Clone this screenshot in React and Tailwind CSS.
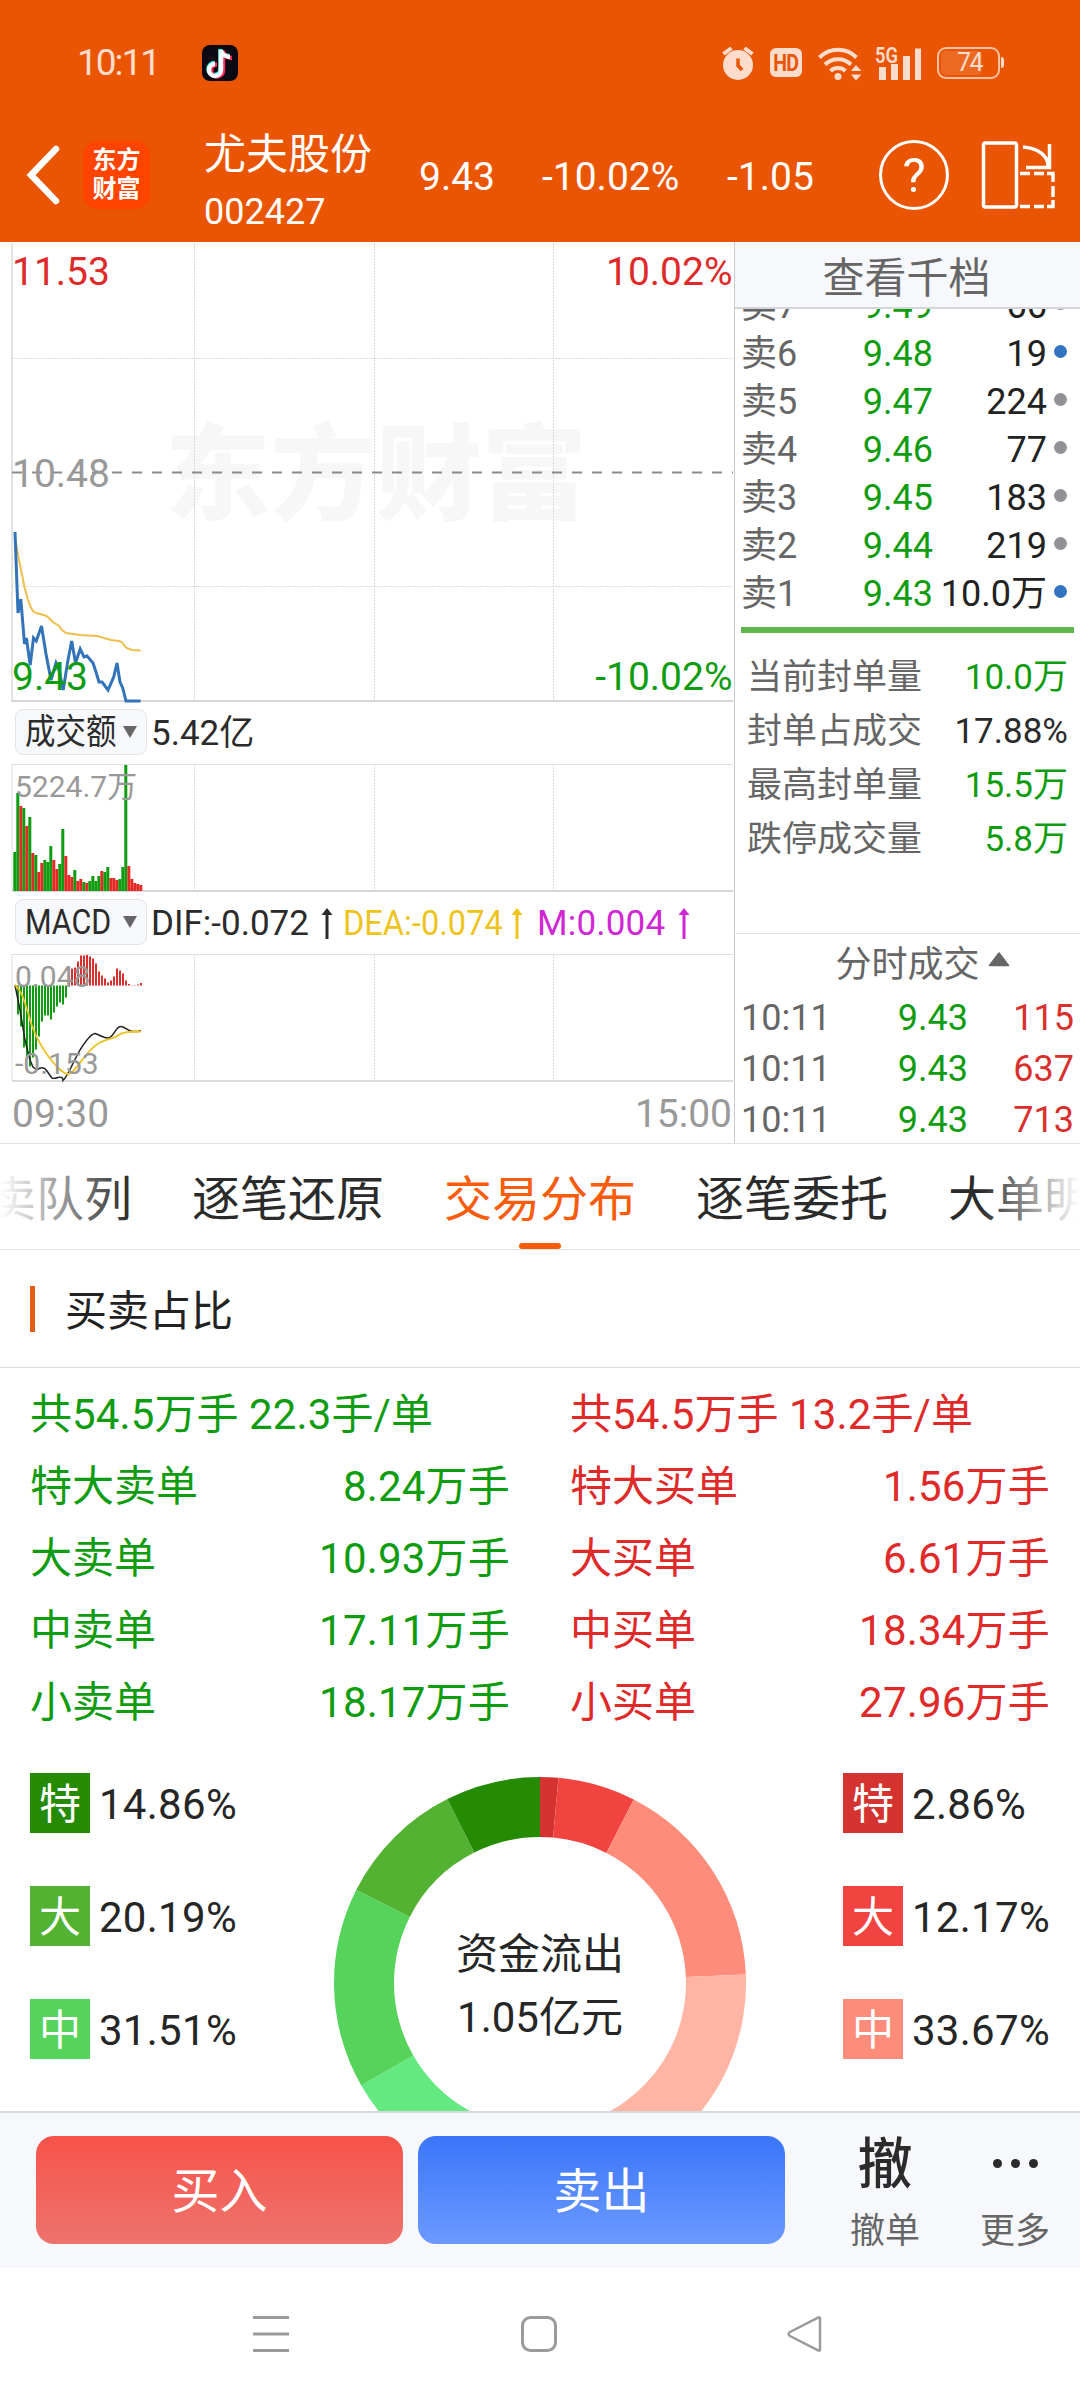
import React from "react";

const sellRows = [
  { label: "卖7", price: "9.49", volume: "66", dot: "bg-[#929196]" },
  { label: "卖6", price: "9.48", volume: "19", dot: "bg-[#3273c2]" },
  { label: "卖5", price: "9.47", volume: "224", dot: "bg-[#929196]" },
  { label: "卖4", price: "9.46", volume: "77", dot: "bg-[#929196]" },
  { label: "卖3", price: "9.45", volume: "183", dot: "bg-[#929196]" },
  { label: "卖2", price: "9.44", volume: "219", dot: "bg-[#929196]" },
  { label: "卖1", price: "9.43", volume: "10.0万", dot: "bg-[#3273c2]" },
];

const sealStats = [
  { label: "当前封单量", value: "10.0万", color: "text-[#109c10]" },
  { label: "封单占成交", value: "17.88%", color: "text-[#2b2b2b]" },
  { label: "最高封单量", value: "15.5万", color: "text-[#109c10]" },
  { label: "跌停成交量", value: "5.8万", color: "text-[#109c10]" },
];

const trades = [
  { time: "10:11", price: "9.43", volume: "115" },
  { time: "10:11", price: "9.43", volume: "637" },
  { time: "10:11", price: "9.43", volume: "713" },
];

const sellOrders = [
  ["特大卖单", "8.24万手"],
  ["大卖单", "10.93万手"],
  ["中卖单", "17.11万手"],
  ["小卖单", "18.17万手"],
];

const buyOrders = [
  ["特大买单", "1.56万手"],
  ["大买单", "6.61万手"],
  ["中买单", "18.34万手"],
  ["小买单", "27.96万手"],
];

const sellShare = [
  { tag: "特", value: "14.86%", bg: "bg-[#258a04]" },
  { tag: "大", value: "20.19%", bg: "bg-[#53b232]" },
  { tag: "中", value: "31.51%", bg: "bg-[#56d35a]" },
];

const buyShare = [
  { tag: "特", value: "2.86%", bg: "bg-[#d43330]" },
  { tag: "大", value: "12.17%", bg: "bg-[#f14340]" },
  { tag: "中", value: "33.67%", bg: "bg-[#fd8c7b]" },
];

const donut = [
  { value: 2.86, color: "#d43330" },
  { value: 12.17, color: "#f14340" },
  { value: 33.67, color: "#fd8c7b" },
  { value: 51.3, color: "#feb5a4" },
  { value: 33.44, color: "#64e981" },
  { value: 31.51, color: "#56d35a" },
  { value: 20.19, color: "#53b232" },
  { value: 14.86, color: "#258a04" },
];

// [height, is up]
const volumeBars = [
  [39, 0], [98, 0], [85, 1], [83, 0], [65, 1], [74, 0], [38, 1], [36, 0], [19, 1], [28, 1], [31, 0],
  [29, 0], [45, 0], [31, 1], [22, 1], [27, 0], [62, 0], [35, 1], [16, 1], [14, 1], [21, 0], [10, 1],
  [12, 1], [9, 0], [8, 1], [10, 0], [15, 0], [10, 0], [15, 0], [20, 1], [19, 0], [24, 0], [13, 1],
  [13, 1], [11, 1], [12, 0], [24, 0], [126, 0], [25, 1], [12, 1], [8, 1], [7, 1], [6, 1],
];

// positive goes above the zero line
const macdBars = [
  -29, -41, -62, -71, -81, -72, -64, -51, -36, -30, -30, -34, -27, -21, -17, -19, -12, 10, 17, 18, 24,
  30, 30, 30.5, 29, 27, 22, 14, 10, 7, 3, 5, 9, 17, 15, 12, 5, 1.5, 0.3, 0.3, 1, 2.5,
];

const pricePoints =
  "15,532 18,613 20.8,599 24.5,644 26.4,638 30.2,665 33.5,638 36.3,641 41.5,626 46,654 51,680 56,663 59,670 63.2,690 68,660 71.7,641 75.5,663 80.2,649 84,657 87,656 93,663 96,672 99,682 102,682 108,690 113.7,677 117,663 120,682 122.7,688 126,701 140.6,701";
const avgPoints =
  "15.5,540 19,560 24.5,587 28,600 30.7,607 33,611 36.3,613 42,614.5 46.2,616 49,618 52.9,622 59,626 62,630 66,633 80,635 97.7,636 104,638 111,640 119,641 121.8,642 124,645 126.5,648 132,650 140.6,650.5";

const sliceAt = (deg, r) => {
  const a = (deg * Math.PI) / 180;
  return `${206 + r * Math.sin(a)} ${206 - r * Math.cos(a)}`;
};

function StatusBar() {
  return (
    <div className="flex h-[84px] items-center pt-[41px] text-[#fddccb]">
      <span className="ml-[77px] w-[125px] text-[37px] tracking-[-2px]">10:11</span>
      <svg width="36" height="36" viewBox="0 0 36 36">
        <rect width="36" height="36" rx="8" fill="#0b0a14" />
        <g fill="none" strokeWidth="4.5">
          <path d="M18 4.5v20a6 6 0 1 1-6-6M18 5c1 4 5 6.500 9 6.500" stroke="#27f0ec" transform="translate(0.500 -.5)" />
          <path d="M20 5v20a6 6 0 1 1-6-6M20 6c1 4 5 6.500 9 6.500" stroke="#fd2d58" transform="translate(1 .5)" />
          <path d="M19 5v20a6 6 0 1 1-6-6M19 5.500c1 4 5 6.500 9 6.500" stroke="#fff" />
        </g>
      </svg>

      <svg className="ml-[484px]" width="32" height="36" viewBox="0 0 32 36">
        <circle cx="16" cy="20" r="15" fill="currentColor" />
        <path d="M1.500 9l8-6M30.500 9l-8-6" stroke="currentColor" strokeWidth="4" />
        <path d="M16 13.500v7l4 4.500" fill="none" stroke="#ea5504" strokeWidth="3.500" />
      </svg>
      <span className="ml-[16px] flex h-[29px] w-[32px] items-center justify-center rounded-[6px] bg-[#fddccb] pt-[2px] text-[23px] leading-none font-bold tracking-[-1px] text-[#ea5504]">
        <span className="scale-x-[0.85]">HD</span>
      </span>
      <svg className="ml-[15px]" width="46" height="36" viewBox="0 0 46 36">
        <g fill="none" stroke="currentColor" strokeWidth="4">
          <path d="M2.500 12.500a26 26 0 0 1 37 0" />
          <path d="M8 19.500a18.500 18.500 0 0 1 26 0" />
          <path d="M13.500 26a11 11 0 0 1 15 0" />
        </g>
        <circle cx="21" cy="31.500" r="3.500" fill="currentColor" />
        <path d="M34 26l5-6 5.500 6zM34 29.500l5 6 5.500-6z" fill="currentColor" />
      </svg>
      <svg className="ml-[12px]" width="48" height="36" viewBox="0 0 48 36">
        <text x="0" y="17.500" fontSize="22" fontWeight="600" fill="currentColor" textLength="23" lengthAdjust="spacingAndGlyphs">5G</text>
        <path d="M4 22h7v13h-7zM16 19h7v16h-7zM28 11h7v24h-7zM40 3.500h6v31.500h-6z" fill="currentColor" />
      </svg>
      <span className="ml-[14px] flex h-[32px] w-[63px] rounded-[9px] border-2 border-[#fddccb]/80 p-[2px]">
        <span className="flex w-[41px] items-center justify-end rounded-[5px] bg-white/12 pt-[1px] text-[25px] leading-[24px] tracking-[-1.5px]">
          74
        </span>
      </span>
      <span className="ml-[1px] h-[11px] w-[3px] rounded-r bg-[#fddccb]" />
    </div>
  );
}

function TitleBar() {
  return (
    <div className="mt-[24px] flex h-[134px] items-center text-[39px] text-white">
      <svg className="ml-[25px]" width="36" height="60" viewBox="0 0 36 60" fill="none" stroke="#fff" strokeWidth="6.500">
        <path d="M31 4L6 30l25 26" strokeLinecap="round" />
      </svg>
      <div className="ml-[22px] flex h-[68px] w-[67px] flex-col items-center justify-center rounded-[15px] bg-[#ff4400] text-[24px] leading-[29px] font-bold">
        <span>东方</span>
        <span>财富</span>
      </div>
      <div className="mt-[15px] ml-[54px] flex w-[215px] flex-col">
        <span className="text-[42px] leading-[58px]">尤夫股份</span>
        <span className="text-[36px] leading-[56px]">002427</span>
      </div>
      <span className="w-[123px] pt-[4px]">9.43</span>
      <span className="w-[185px] pt-[4px]">-10.02%</span>
      <span className="w-[152px] pt-[4px]">-1.05</span>
      <span className="flex h-[70px] w-[70px] items-center justify-center rounded-full border-[3px] border-white text-[49px] leading-none">
        ?
      </span>
      <svg className="ml-[32px]" width="76" height="70" viewBox="0 0 76 70" fill="none" stroke="#fff" strokeWidth="3.500">
        <rect x="2.500" y="3" width="33" height="64" rx="2" />
        <path d="M42 7c14 1 25 8 25 19M45 27.500h23.500V4" />
        <path d="M39 33.500h10M53 33.500h10M66 33.500h6V42M72 46v11M72 60v6.500h-6M63 66.500h-10M49 66.500h-10" />
      </svg>
    </div>
  );
}

function GridLines({ top, bottom }) {
  return (
    <g stroke="#d9d9d9" strokeDasharray="2 1" shapeRendering="crispEdges">
      {[194.5, 374.5, 553.5].map((x) => (
        <line key={x} x1={x} x2={x} y1={top} y2={bottom} />
      ))}
    </g>
  );
}

function PriceChart() {
  return (
    <svg className="block" width="734" height="462" viewBox="0 242 734 462" fontSize="39">
      <text x="165" y="512" fontSize="104" fontWeight="900" fill="#f7f7f7" textLength="422" lengthAdjust="spacingAndGlyphs">东方财富</text>
      <GridLines top={243} bottom={701} />
      <g stroke="#dcdcdc" shapeRendering="crispEdges">
        <path d="M12 358.500H733M12 586.500H733" strokeDasharray="2 1" />
        <path d="M12 243V702" strokeWidth="2" stroke="#e2e2e2" />
        <path d="M12 701H733" strokeWidth="2" stroke="#d6d6d6" />
      </g>
      <path d="M12 472.500H733" stroke="#8a8a8a" strokeWidth="2" strokeDasharray="10 10" />
      <polyline points={avgPoints} fill="none" stroke="#efbe4d" strokeWidth="2" />
      <polyline points={pricePoints} fill="none" stroke="#3273b9" strokeWidth="3" />
      <text x="12" y="285" fill="#e02a2a">11.53</text>
      <text x="732.5" y="285" fill="#e02a2a" textAnchor="end">10.02%</text>
      <text x="12" y="487" fill="#999">10.48</text>
      <text x="12" y="690" fill="#109c10">9.43</text>
      <text x="732.5" y="690" fill="#109c10" textAnchor="end">-10.02%</text>
    </svg>
  );
}

function VolumeChart() {
  return (
    <svg className="block" width="734" height="133" viewBox="0 760 734 133">
      <GridLines top={764} bottom={890} />
      <path d="M12 764.500H733M12 764V891" stroke="#dfdfdf" fill="none" />
      <path d="M12 891H733" stroke="#d6d6d6" strokeWidth="2" />
      {volumeBars.map(([h, up], i) => (
        <rect key={i} x={13.3 + i * 3} y={891 - h} width="3" height={h} fill={up ? "#e52a26" : "#109c10"} />
      ))}
      <text x="15" y="797" fontSize="30" fill="#999">5224.7万</text>
    </svg>
  );
}

function MacdChart() {
  return (
    <svg className="block" width="734" height="134" viewBox="0 951 734 134">
      <GridLines top={954} bottom={1080} />
      <path d="M12 954.500H733M12 954V1081" stroke="#dfdfdf" fill="none" />
      <path d="M12 1081H733" stroke="#dcdcdc" strokeWidth="2" />
      {macdBars.map((v, i) => (
        <rect
          key={i}
          x={17 + i * 3}
          y={v > 0 ? 985.5 - v : 985.5}
          width="2"
          height={Math.abs(v)}
          fill={v > 0 ? "#d9302e" : "#109c10"}
        />
      ))}
      <path
        d="M15 985L20 1010 25 1040 30 1060 33 1067 37 1070Q43 1065 47 1071T52 1078 58 1077.500 63 1080.500C68 1076 71 1066 80 1050Q90 1034 95 1033.500C100 1035 105 1039 109 1038C115 1035 116 1026 121 1026.500S127 1031 133 1031.500 138 1031 141 1030.500"
        fill="none"
        stroke="#222"
        strokeWidth="1.500"
      />
      <path
        d="M15 985C24 992 28 1015 32 1026S43 1052 58 1068C66 1075 68 1075 72 1072.500C80 1064 90 1047 100 1042.500S113 1039 117 1036 125 1031.500 141 1031.500"
        fill="none"
        stroke="#ecc221"
        strokeWidth="1.800"
      />
      <g fontSize="30" fill="#999">
        <text x="15" y="987">0.048</text>
        <text x="15" y="1073.500">-0.153</text>
      </g>
    </svg>
  );
}

function IndicatorPill({ children }) {
  return (
    <span className="ml-[15px] flex h-[46px] w-[132px] shrink-0 items-center rounded-[8px] border border-[#e2e4e8] bg-[#f6f8fb] pl-[9px]">
      <span className="w-[98px]">
        <span className="inline-block origin-left scale-x-[0.87] pt-[2px] whitespace-nowrap">{children}</span>
      </span>
      <span className="h-0 w-0 border-x-[7.5px] border-t-[12px] border-x-transparent border-t-[#666]" />
    </span>
  );
}

function UpArrow() {
  return (
    <svg className="shrink-0" width="12" height="32" viewBox="0 0 12 32" fill="currentColor">
      <path d="M6 0l5.500 7H7.500v24h-3V7H.5z" />
    </svg>
  );
}

function ChartPanel() {
  return (
    <div className="w-[734px] text-[35px] leading-[46px] text-[#2b2b2b]">
      <PriceChart />
      <div className="flex h-[56px] items-center">
        <IndicatorPill>成交额</IndicatorPill>
        <span className="ml-[4px] pt-[3px]">5.42亿</span>
      </div>
      <VolumeChart />
      <div className="flex h-[58px] items-center whitespace-nowrap">
        <IndicatorPill>MACD</IndicatorPill>
        <span className="ml-[4px] flex w-[192px] items-center gap-[12px] pt-[3px]">DIF:-0.072<UpArrow /></span>
        <span className="flex w-[194px] items-center pt-[3px] text-[#eec41c]">
          <span className="w-[168px]">
            <span className="inline-block origin-left scale-x-[0.93]">DEA:-0.074</span>
          </span>
          <UpArrow />
        </span>
        <span className="flex items-center gap-[13px] pt-[3px] text-[#cf27d4]">
          <span className="tracking-[0.2px]">M:0.004</span>
          <UpArrow />
        </span>
      </div>
      <MacdChart />
      <div className="flex h-[58px] items-center justify-between pr-[2px] pl-[12px] text-[39px] text-[#999]">
        <span>09:30</span>
        <span>15:00</span>
      </div>
    </div>
  );
}

function OrderBook() {
  return (
    <div className="flex w-[346px] flex-col overflow-hidden border-l border-[#c8cacc] text-[36px] text-[#666]">
      <div className="flex h-[67px] shrink-0 items-center justify-center border-b-2 border-[#d2d6da] bg-[#f6f8fb] pt-[7px] pr-[2px] text-[42px]">
        查看千档
      </div>
      <div className="flex h-[308px] shrink-0 flex-col justify-end overflow-hidden">
        {sellRows.map((row) => (
          <div key={row.label} className="flex h-[48px] shrink-0 items-center pl-[6px] leading-[48px]">
            <span className="w-[90px] pt-[2px]">{row.label}</span>
            <span className="w-[102px] pt-[2px] text-right text-[#109c10]">{row.price}</span>
            <span className="w-[114px] pt-[2px] text-right whitespace-nowrap text-[#222]">{row.volume}</span>
            <span className={`mb-[4px] ml-[7px] h-[13px] w-[13px] rounded-full ${row.dot}`} />
          </div>
        ))}
      </div>
      <div className="mt-[10px] mr-[6px] ml-[6px] h-[6px] shrink-0 bg-[#5fb74b]" />

      <div className="mt-[18px] shrink-0 text-[35px]">
        {sealStats.map((s) => (
          <div key={s.label} className="flex h-[54px] items-center justify-between pr-[12px] pl-[12px]">
            <span>{s.label}</span>
            <span className={s.color}>{s.value}</span>
          </div>
        ))}
      </div>

      <div className="mt-[66px] flex h-[59px] shrink-0 items-center justify-center gap-[8px] border-t border-[#e4e4e4] pt-[3px] pl-[30px]">
        分时成交
        <svg className="mb-[10px]" width="22" height="15" viewBox="0 0 22 15" fill="#666">
          <path d="M11 1L20.500 13.500H1.500z" stroke="#666" strokeLinejoin="round" strokeWidth="1.500" />
        </svg>
      </div>
      {trades.map((t) => (
        <div key={t.volume} className="flex h-[51px] shrink-0 items-center pl-[6px]">
          <span className="w-[100px]">{t.time}</span>
          <span className="w-[127px] text-right text-[#109c10]">{t.price}</span>
          <span className="w-[106px] text-right text-[#d9302e]">{t.volume}</span>
        </div>
      ))}
    </div>
  );
}

function Tabs() {
  const tabs = ["买卖队列", "逐笔还原", "交易分布", "逐笔委托", "大单明细"];
  return (
    <div className="relative flex h-[106px] justify-center gap-[60px] overflow-hidden border-b border-[#e2e2e2] text-[48px] whitespace-nowrap text-[#2b2b2b]">
      {tabs.map((tab) => (
        <div key={tab} className="flex w-[192px] shrink-0 flex-col items-center">
          <span className={tab === "交易分布" ? "h-[99px] leading-[112px] text-[#f95c0c]" : "h-[99px] leading-[112px]"}>
            {tab}
          </span>
          {tab === "交易分布" && <span className="h-[6px] w-[42px] rounded-[3px] bg-[#f95a08]" />}
        </div>
      ))}
      <div className="absolute top-0 left-0 h-[104px] w-[130px] bg-linear-to-r from-white to-white/0" />
      <div className="absolute top-0 right-0 h-[104px] w-[100px] bg-linear-to-l from-white to-white/0" />
    </div>
  );
}

function OrderColumn({ title, rows, color }) {
  return (
    <div className={`w-[480px] text-[42px] leading-[72px] ${color}`}>
      <div className="tracking-[0.1px]">{title}</div>
      {rows.map(([label, value]) => (
        <div key={label} className="flex justify-between">
          <span>{label}</span>
          <span className="tracking-[0.2px]">{value}</span>
        </div>
      ))}
    </div>
  );
}

function ShareColumn({ items }) {
  return (
    <div className="flex w-[207px] flex-col gap-[53px] text-[42px] text-[#262626]">
      {items.map((item) => (
        <div key={item.tag} className="flex h-[60px] items-center">
          <span className={`flex h-[60px] w-[60px] items-center justify-center pt-[3px] text-white ${item.bg}`}>{item.tag}</span>
          <span className="ml-[9px] pt-[3px] tracking-[0.3px]">{item.value}</span>
        </div>
      ))}
    </div>
  );
}

function Donut() {
  let angle = 0;
  const slices = donut.map((d) => {
    const from = angle;
    angle += d.value * 1.8;
    return {
      color: d.color,
      path: `M${sliceAt(from, 206)} A206 206 0 0 1 ${sliceAt(angle, 206)} L${sliceAt(angle, 146)} A146 146 0 0 0 ${sliceAt(from, 146)}Z`,
    };
  });
  return (
    <div className="grid h-[412px] w-[412px] shrink-0">
      <svg className="col-start-1 row-start-1" width="412" height="412" viewBox="0 0 412 412">
        {slices.map((s) => (
          <path key={s.color} d={s.path} fill={s.color} />
        ))}
      </svg>
      <div className="col-start-1 row-start-1 flex flex-col items-center justify-center pt-[5px] text-[42px] leading-[63px] text-[#262626]">
        <span>资金流出</span>
        <span>1.05亿元</span>
      </div>
    </div>
  );
}

function TradeBar() {
  return (
    <div className="flex h-[157px] border-t-2 border-[#d5d9dd] bg-[#f6f8fb] pt-[23px] pl-[36px] text-[48px] text-white">
      <button className="h-[108px] w-[367px] rounded-[18px] bg-linear-to-b from-[#f6524a] to-[#ed736c] pt-[4px]">买入</button>
      <button className="ml-[15px] h-[108px] w-[367px] rounded-[18px] bg-linear-to-b from-[#3a76fa] to-[#6c99ff] pt-[4px]">卖出</button>
      <div className="ml-[64px] flex w-[72px] flex-col items-center text-[35px] leading-[40px] text-[#666]">
        <span className="h-[76px] text-[55px] leading-[56px] font-medium text-[#2b2b2b]">撤</span>
        <span>撤单</span>
      </div>
      <div className="ml-[58px] flex w-[72px] flex-col items-center text-[35px] leading-[40px] text-[#666]">
        <span className="flex h-[76px] gap-[9px] pt-[23px]">
          <i className="h-[9px] w-[9px] rounded-full bg-[#2b2b2b]" />
          <i className="h-[9px] w-[9px] rounded-full bg-[#2b2b2b]" />
          <i className="h-[9px] w-[9px] rounded-full bg-[#2b2b2b]" />
        </span>
        <span>更多</span>
      </div>
    </div>
  );
}

function NavBar() {
  return (
    <div className="flex h-[132px] items-center justify-between pr-[255px] pl-[251px]">
      <svg width="40" height="40" viewBox="0 0 40 40" stroke="#9b9b9b" strokeWidth="3">
        <path d="M2 3.500h36M2 20h36M2 36.500h36" />
      </svg>
      <svg width="40" height="40" viewBox="0 0 40 40" fill="none" stroke="#9b9b9b" strokeWidth="3">
        <rect x="4.500" y="3.500" width="33" height="33" rx="8" />
      </svg>
      <svg width="40" height="40" viewBox="0 0 40 40" fill="none" stroke="#9b9b9b" strokeWidth="2.500">
        <path d="M35 4.500v31q0 2-2 .8L5 22q-3-2 0-4L33 3.700q2-1.200 2 .8z" />
      </svg>
    </div>
  );
}

export default function App() {
  return (
    <div className="flex h-[2400px] w-[1080px] flex-col overflow-hidden bg-white font-['Roboto','Noto_Sans_CJK_SC',sans-serif]">
      <header className="h-[242px] shrink-0 bg-[#ea5504]">
        <StatusBar />
        <TitleBar />
      </header>

      <section className="flex h-[902px] shrink-0 border-b border-[#e0e0e0]">
        <ChartPanel />
        <OrderBook />
      </section>

      <Tabs />

      <div className="flex h-[118px] shrink-0 items-center border-b border-[#dcdcdc] pl-[30px] text-[42px] text-[#222]">
        <span className="h-[46px] w-[5px] bg-[#e25c16]" />
        <span className="mt-[6px] ml-[30px]">买卖占比</span>
      </div>

      <main className="flex h-[743px] shrink-0 flex-col overflow-hidden pt-[11px]">
        <div className="flex justify-between px-[30px]">
          <OrderColumn title="共54.5万手 22.3手/单" rows={sellOrders} color="text-[#109c10]" />
          <OrderColumn title="共54.5万手 13.2手/单" rows={buyOrders} color="text-[#e02a2a]" />
        </div>
        <div className="mt-[34px] flex items-start justify-between px-[30px]">
          <ShareColumn items={sellShare} />
          <div className="mt-[4px]">
            <Donut />
          </div>
          <ShareColumn items={buyShare} />
        </div>
      </main>

      <TradeBar />
      <NavBar />
    </div>
  );
}
